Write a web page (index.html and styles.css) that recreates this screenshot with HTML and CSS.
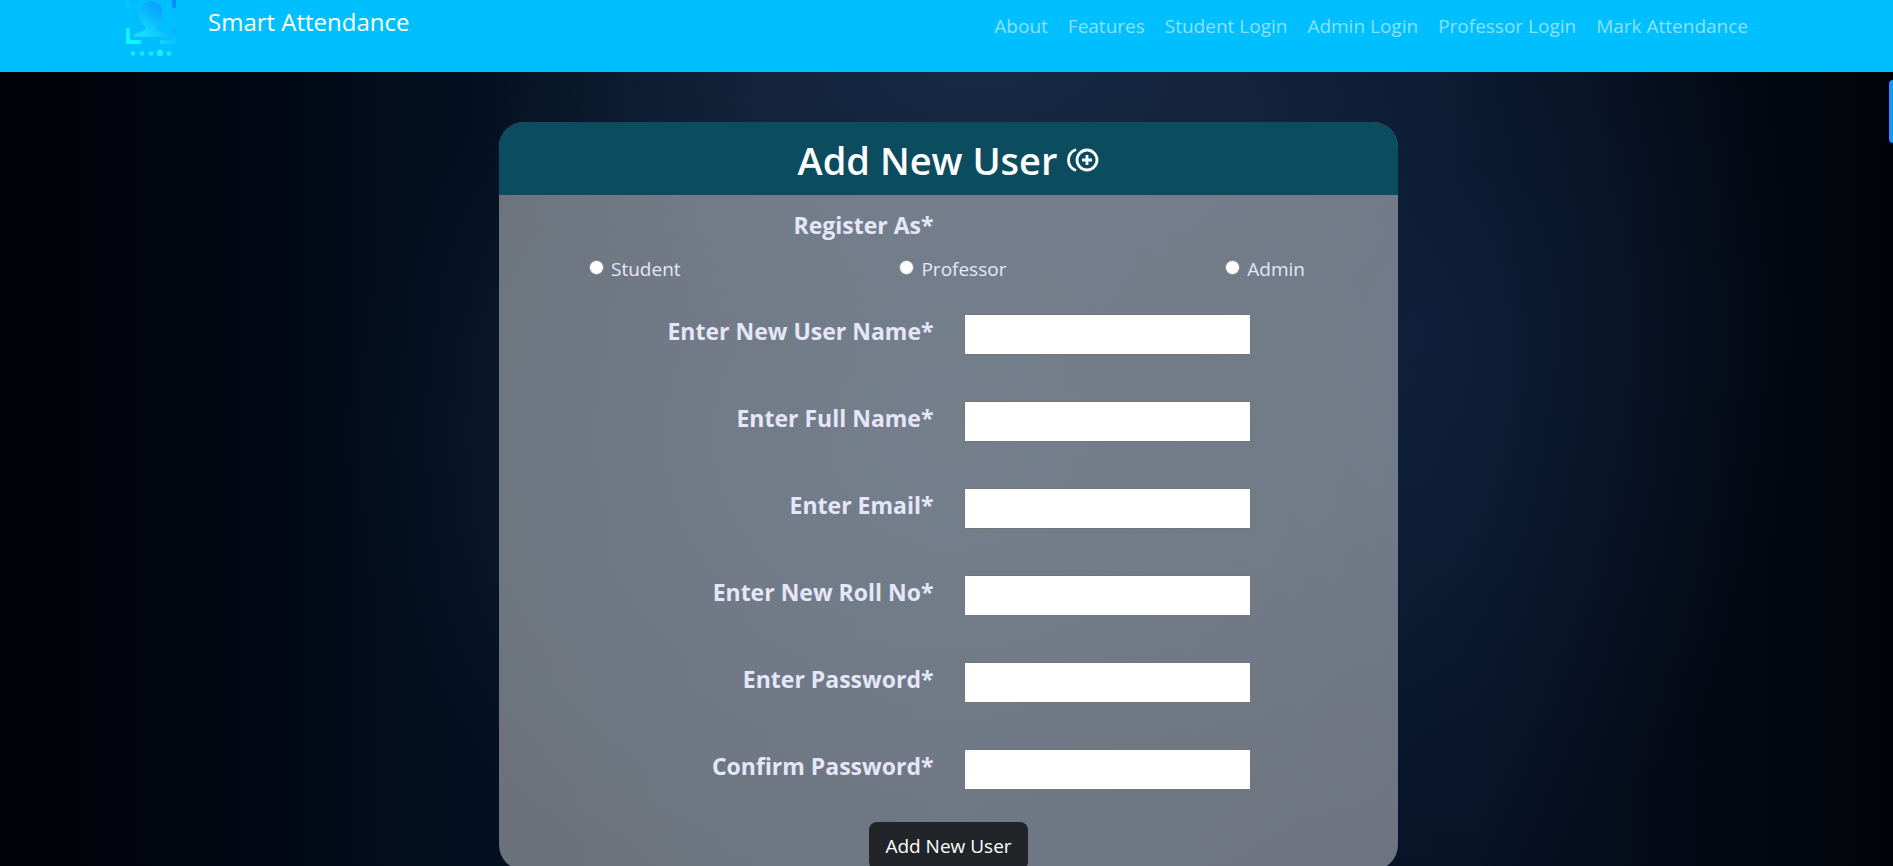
FILE: index.html
```
<!DOCTYPE html>
<html lang="en">
<head>
<meta charset="utf-8">
<meta name="viewport" content="width=device-width, initial-scale=1">
<title>Smart Attendance</title>
<link rel="stylesheet" href="styles.css">
</head>
<body>
<header class="navbar">
  <a class="brand" href="#">
    <svg class="brand-logo" viewBox="0 0 50 57" aria-hidden="true">
      <defs>
        <linearGradient id="logo-fill" gradientUnits="userSpaceOnUse" x1="50" y1="-2" x2="12" y2="44">
          <stop offset="0" stop-color="#0a84ff"/>
          <stop offset="0.3" stop-color="#05a4ff"/>
          <stop offset="0.5" stop-color="#0ab8ff"/>
          <stop offset="0.75" stop-color="#0cd8ff"/>
          <stop offset="1" stop-color="#0ff4ff"/>
        </linearGradient>
      </defs>
      <g fill="url(#logo-fill)">
        <path d="M0 0h4v8H0zM46 0h4v8h-4z"/>
        <path d="M0 28h4v12h11v4H0zM46 28h4v16H34v-4h12z"/>
        <path stroke="#2cb6ee" stroke-width="0.7" d="M25 1c7 0 12 5 12 12 0 6-3 10-6 13-1 2 0 4 2 5 4 1 9 2 9 6H8c0-4 5-5 9-6 2-1 3-3 2-5-3-3-6-7-6-13C13 6 18 1 25 1z"/>
      </g>
      <g fill="#12f1ff">
        <circle cx="7" cy="53.500" r="2.200"/><circle cx="16" cy="53.500" r="2.200"/><circle cx="25" cy="53.500" r="2.200"/><circle cx="34" cy="53" r="3.200"/><circle cx="43" cy="53.500" r="2.200"/>
      </g>
    </svg>
    <span class="brand-name">Smart Attendance</span>
  </a>
  <nav class="nav-links">
    <a href="#">About</a>
    <a href="#">Features</a>
    <a href="#">Student Login</a>
    <a href="#">Admin Login</a>
    <a href="#">Professor Login</a>
    <a href="#">Mark Attendance</a>
  </nav>
</header>
<main class="page">
  <section class="card">
    <h1 class="card-title">
      Add New User
      <svg class="title-icon" viewBox="0 0 32 24" aria-hidden="true" fill="none" stroke="#fff">
        <circle cx="20" cy="12" r="10" stroke-width="2.800"/>
        <path stroke-width="2.800" d="M9 1.500C4 3.500 1.500 7.500 1.500 12S4 20.500 9 22.500"/>
        <path stroke-width="2.800" d="M20 7v10M15 12h10"/>
      </svg>
    </h1>
    <form class="form">
      <div class="row">
        <span class="label" id="role-label">Register As*</span>
      </div>
      <div class="roles" role="radiogroup" aria-labelledby="role-label">
        <label class="role"><input type="radio" name="role">Student</label>
        <label class="role"><input type="radio" name="role">Professor</label>
        <label class="role"><input type="radio" name="role">Admin</label>
      </div>
      <div class="fields">
        <div class="row"><label class="label" for="username">Enter New User Name*</label><input class="field" id="username" type="text"></div>
        <div class="row"><label class="label" for="fullname">Enter Full Name*</label><input class="field" id="fullname" type="text"></div>
        <div class="row"><label class="label" for="email">Enter Email*</label><input class="field" id="email" type="email"></div>
        <div class="row"><label class="label" for="roll">Enter New Roll No*</label><input class="field" id="roll" type="text"></div>
        <div class="row"><label class="label" for="password">Enter Password*</label><input class="field" id="password" type="password"></div>
        <div class="row"><label class="label" for="confirm">Confirm Password*</label><input class="field" id="confirm" type="password"></div>
      </div>
      <button class="submit" type="button">Add New User</button>
    </form>
  </section>
</main>
<div class="side-tab" aria-hidden="true"></div>
</body>
</html>
```
FILE: styles.css
```
* {
  box-sizing: border-box;
}

html {
  overflow: hidden;
}

body {
  margin: 0;
  min-height: 100vh;
  font-family: "Segoe UI", "Open Sans", "Noto Sans", sans-serif;
  font-size: 19px;
  line-height: 30px;
  color: #e6e6fa;
  background-color: #020611;
  background-image:
    radial-gradient(ellipse 32% 60% at 50% 50%, rgba(22, 42, 66, 0.9), rgba(22, 42, 66, 0)),
    radial-gradient(ellipse 28% 40% at 52% 4%, rgba(28, 46, 74, 0.9), rgba(28, 46, 74, 0)),
    radial-gradient(ellipse 20% 65% at 75% 38%, rgba(15, 33, 60, 0.8), rgba(15, 33, 60, 0)),
    linear-gradient(90deg, #010207 0%, #010510 10%, #030f1f 24%, #06152b 50%, #071226 78%, #040a16 88%, #010309 100%);
}

.navbar {
  display: flex;
  justify-content: space-between;
  align-items: flex-start;
  height: 72px;
  padding: 0 145px 0 126px;
  background: #00bfff;
}

.navbar a {
  text-decoration: none;
}

.brand {
  display: flex;
  gap: 32px;
  color: #fff;
}

.brand-logo {
  width: 50px;
  height: 57px;
}

.brand-name {
  padding-top: 7px;
  font-size: 24px;
}

.nav-links {
  display: flex;
  gap: 20px;
  padding-top: 11px;
}

.nav-links a {
  color: rgba(255, 255, 255, 0.55);
}

.page {
  padding: 50px 0 0 4px;
}

.card {
  width: 899px;
  max-width: 100%;
  margin: 0 auto;
  overflow: hidden;
  border-radius: 25px;
  background: rgba(235, 235, 235, 0.45);
}

.card-title {
  display: flex;
  justify-content: center;
  align-items: center;
  gap: 10px;
  height: 73px;
  margin: 0;
  padding-top: 2px;
  font-size: 38px;
  font-weight: 600;
  line-height: 48px;
  color: #fff;
  background: #0c4c5f;
}

.title-icon {
  width: 32px;
  height: 24px;
}

.form {
  display: flex;
  flex-direction: column;
  padding-top: 15px;
}

.row {
  display: grid;
  grid-template-columns: 1fr 1fr;
  gap: 30px;
}

.label {
  text-align: right;
  font-size: 23px;
  font-weight: 700;
}

.fields .label {
  padding-top: 2px;
}

.roles {
  display: flex;
  justify-content: space-between;
  padding: 14px 93px 0 90px;
}

.role {
  display: flex;
  align-items: center;
  gap: 7px;
}

.role input {
  appearance: none;
  width: 15px;
  height: 15px;
  margin: 0 0 4px;
  border: 1px solid #8a8a8a;
  border-radius: 50%;
  background: #fff;
}

.fields {
  display: grid;
  gap: 46px;
  padding-top: 30px;
}

.field {
  width: 287px;
  height: 41px;
  padding: 1px 2px;
  border: 1px solid #767676;
  border-radius: 0;
  background: #fff;
  font: inherit;
}

.submit {
  align-self: center;
  width: 159px;
  height: 48px;
  margin-top: 32px;
  border: 0;
  border-radius: 8px;
  font: inherit;
  color: #fff;
  background: #212529;
}

.side-tab {
  position: fixed;
  top: 80px;
  right: 0;
  width: 4px;
  height: 63px;
  border-radius: 8px 0 0 8px;
  background: #1e90ff;
}
```
